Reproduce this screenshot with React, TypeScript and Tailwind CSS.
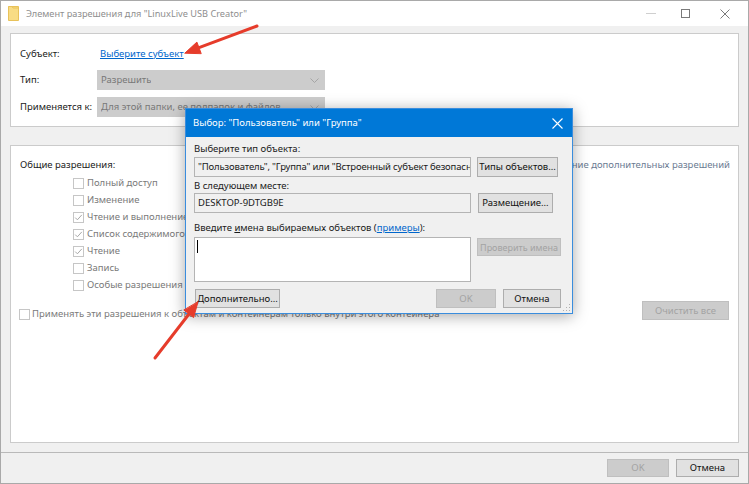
import clsx from "clsx";
import type { ReactNode } from "react";

type BtnProps = {
  children: ReactNode;
  disabled?: boolean;
  className?: string;
};

const Btn = ({ children, disabled, className }: BtnProps) => (
  <div
    className={clsx(
      "flex shrink-0 items-center justify-center whitespace-nowrap border leading-none",
      disabled
        ? "border-[#bfbfbf] bg-[#cccccc] text-[#a3a3a3]"
        : "border-[#adadad] bg-[#e1e1e1] text-[#111]",
      className,
    )}
  >
    {children}
  </div>
);

const Check = ({ checked }: { checked?: boolean }) => (
  <span className="flex h-[11px] w-[11px] shrink-0 items-center justify-center border border-[#c6c6c6] bg-white">
    {checked && (
      <svg width="9" height="9" viewBox="0 0 9 9">
        <path d="M1.2 4.6 L3.4 6.8 L7.8 1.9" fill="none" stroke="#a8a8a8" strokeWidth="1" />
      </svg>
    )}
  </span>
);

const Dropdown = ({ value }: { value: string }) => (
  <div className="flex h-[20px] w-[228px] items-center justify-between bg-[#cccccc] pl-[4px] pr-[6px] text-[#787878]">
    <span className="truncate">{value}</span>
    <svg width="9" height="5" viewBox="0 0 9 5">
      <path d="M0.5 0.5 L4.5 4.5 L8.5 0.5" fill="none" stroke="#a5a5a5" strokeWidth="1" />
    </svg>
  </div>
);

const permissions = [
  { label: "Полный доступ", checked: false },
  { label: "Изменение", checked: false },
  { label: "Чтение и выполнение", checked: true },
  { label: "Список содержимого папки", checked: true },
  { label: "Чтение", checked: true },
  { label: "Запись", checked: false },
  { label: "Особые разрешения", checked: false },
];

export default function App() {
  return (
    <div className="relative flex h-[484px] w-[749px] flex-col overflow-hidden border border-[#a9a9a9] bg-[#f0f0f0] font-['Noto_Sans','Liberation_Sans',sans-serif] text-[9.5px] text-[#1a1a1a]">
      {/* title bar */}
      <div className="flex h-[25px] shrink-0 items-center bg-white pl-[7px]">
        <svg width="11" height="15" viewBox="0 0 11 15">
          <path d="M0.5 0.5 H10.5 V14.5 H0.5 Z" fill="#f8dc84" stroke="#e8c25a" />
          <path d="M0.5 0.5 H4 L5 2 H10.5" fill="none" stroke="#e8c25a" />
        </svg>
        <span className="ml-[7px] text-[9.2px] text-[#8e8e8e]">
          Элемент разрешения для "LinuxLive USB Creator"
        </span>
        <div className="ml-auto flex h-full items-center">
          <div className="flex w-[34px] justify-center">
            <span className="h-px w-[10px] bg-[#cfcfcf]" />
          </div>
          <div className="flex w-[34px] justify-center">
            <span className="h-[9px] w-[9px] border border-[#7a7a7a]" />
          </div>
          <div className="flex w-[46px] justify-center">
            <svg width="10" height="10" viewBox="0 0 10 10">
              <path d="M0.5 0.5 L9.5 9.5 M9.5 0.5 L0.5 9.5" stroke="#7a7a7a" strokeWidth="1" />
            </svg>
          </div>
        </div>
      </div>

      <div className="flex flex-1 flex-col px-[9px] pt-[7px]">
        {/* principal panel */}
        <div className="flex h-[94px] flex-col border border-[#cbcbcb] bg-white pl-[9px] pt-[10px]">
          <div className="flex h-[20px] items-center">
            <span className="w-[80px]">Субъект:</span>
            <span className="text-[#0066cc] underline">Выберите субъект</span>
          </div>
          <div className="mt-[6px] flex h-[20px] items-center">
            <span className="w-[77px]">Тип:</span>
            <Dropdown value="Разрешить" />
          </div>
          <div className="mt-[7px] flex h-[20px] items-center">
            <span className="w-[77px]">Применяется к:</span>
            <Dropdown value="Для этой папки, ее подпапок и файлов" />
          </div>
        </div>

        {/* permissions panel */}
        <div className="mt-[18px] flex h-[298px] flex-col border border-[#cbcbcb] bg-white pl-[9px] pr-[8px] pt-[12px]">
          <div className="flex items-center justify-between leading-[14px]">
            <span>Общие разрешения:</span>
            <span className="text-[#6b7b92]">Отображение дополнительных разрешений</span>
          </div>
          <div className="ml-[53px] mt-[3px] flex flex-col">
            {permissions.map((p) => (
              <div key={p.label} className="flex h-[17px] items-center gap-[3px] text-[#7a7a7a]">
                <Check checked={p.checked} />
                <span>{p.label}</span>
              </div>
            ))}
          </div>
          <div className="mt-[7px] flex items-start justify-between">
            <div className="ml-[-1px] mt-[6px] flex items-center gap-[2px] leading-[14px] text-[#7a7a7a]">
              <Check />
              <span>Применять эти разрешения к объектам и контейнерам только внутри этого контейнера</span>
            </div>
            <Btn disabled className="mr-[1px] h-[19px] w-[87px]">
              Очистить все
            </Btn>
          </div>
        </div>
      </div>

      {/* bottom bar */}
      <div className="flex h-[31px] shrink-0 items-center justify-end gap-[7px] border-t border-[#b9b9b9] pr-[9px]">
        <Btn disabled className="h-[18px] w-[62px]">
          OK
        </Btn>
        <Btn className="h-[18px] w-[63px]">Отмена</Btn>
      </div>

      {/* select user or group dialog */}
      <div className="absolute left-[184px] top-[107px] flex h-[206px] w-[388px] flex-col border border-[#3a8ddd] bg-[#f0f0f0] shadow-[0_2px_14px_rgba(0,0,0,0.35)]">
        <div className="flex h-[28px] shrink-0 items-center justify-between bg-[#0078d7] pl-[7px] pr-[9px] text-[9.5px] text-white">
          <span>Выбор: "Пользователь" или "Группа"</span>
          <svg width="11" height="11" viewBox="0 0 11 11">
            <path d="M0.5 0.5 L10.5 10.5 M10.5 0.5 L0.5 10.5" stroke="#fff" strokeWidth="1.1" />
          </svg>
        </div>
        <div className="relative flex flex-1 flex-col pl-[8px] pr-[11px]">
          <span className="mt-[5px] leading-[14px]">Выберите тип объекта:</span>
          <div className="mt-[1px] flex h-[20px]">
            <div className="flex w-[277px] items-center overflow-hidden whitespace-nowrap border border-[#b4b4b4] bg-[#f0f0f0] px-[3px] tracking-[-0.15px]">
              "Пользователь", "Группа" или "Встроенный субъект безопасности"
            </div>
            <Btn className="ml-[6px] h-[20px] w-[81px]">Типы объектов...</Btn>
          </div>
          <span className="mt-[2px] leading-[14px]">В следующем месте:</span>
          <div className="flex h-[20px]">
            <div className="flex w-[277px] items-center border border-[#b4b4b4] bg-[#f0f0f0] px-[3px]">
              DESKTOP-9DTGB9E
            </div>
            <Btn className="ml-[7px] h-[20px] w-[75px]">Размещение...</Btn>
          </div>
          <span className="mt-[8px] leading-[14px]">
            Введите <span className="underline">и</span>мена выбираемых объектов (
            <span className="text-[#0066cc] underline">примеры</span>):
          </span>
          <div className="mt-[2px] flex">
            <div className="h-[45px] w-[277px] border border-[#b4b4b4] bg-white pl-[2px] pt-[2px]">
              <span className="block h-[13px] w-px bg-black" />
            </div>
            <Btn disabled className="ml-[6px] mt-[1px] h-[18px] w-[84px] text-[9px]">
              Проверить имена
            </Btn>
          </div>
          <div className="mt-[7px] flex h-[19px]">
            <Btn className="ml-[1px] h-[19px] w-[85px]">Дополнительно...</Btn>
            <Btn disabled className="ml-auto h-[19px] w-[60px]">
              OK
            </Btn>
            <Btn className="ml-[7px] h-[19px] w-[58px]">Отмена</Btn>
          </div>
          <svg className="absolute bottom-[1px] right-[1px]" width="8" height="8" viewBox="0 0 8 8">
            <g fill="#b0b0b0">
              <rect x="6" y="0" width="1" height="1" />
              <rect x="3" y="3" width="1" height="1" />
              <rect x="6" y="3" width="1" height="1" />
              <rect x="0" y="6" width="1" height="1" />
              <rect x="3" y="6" width="1" height="1" />
              <rect x="6" y="6" width="1" height="1" />
            </g>
          </svg>
        </div>
      </div>

      {/* red pointer arrows */}
      <svg
        className="pointer-events-none absolute left-[-1px] top-[-1px]"
        width="749"
        height="484"
        viewBox="0 0 749 484"
      >
        <g fill="#e63c2b" stroke="#e63c2b" strokeLinecap="round">
          <line x1="257" y1="26" x2="199" y2="47.7" strokeWidth="3" />
          <polygon points="185,53 196.9,42.1 201.1,53.3" strokeWidth="1" strokeLinejoin="round" />
          <line x1="155" y1="358" x2="189" y2="314" strokeWidth="3" />
          <polygon points="198,302 193.6,317.6 184.1,310.2" strokeWidth="1" strokeLinejoin="round" />
        </g>
      </svg>
    </div>
  );
}
